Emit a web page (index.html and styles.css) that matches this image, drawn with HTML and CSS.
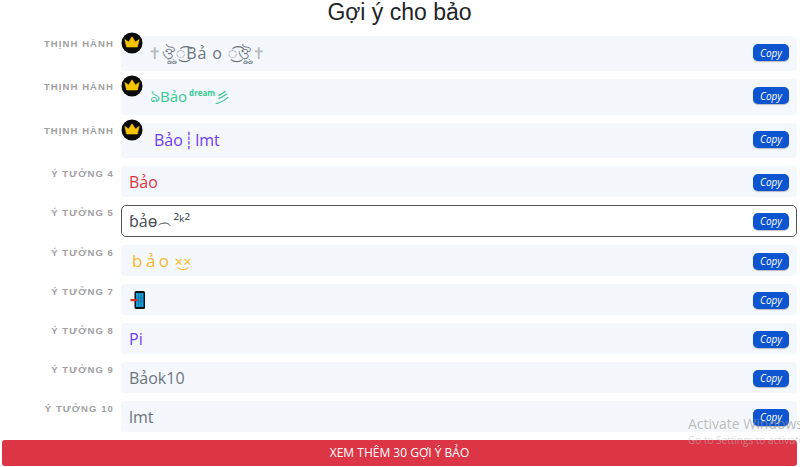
FILE: index.html
```html
<!DOCTYPE html>
<html lang="vi">

<head>
    <meta charset="UTF-8">
    <title>Gợi ý cho bảo</title>
    <link rel="stylesheet" href="styles.css">
</head>

<body>
    <h1 class="title">Gợi ý cho bảo</h1>

    <div class="list">
        <div class="row">
            <div class="label">Thịnh hành</div>
            <div class="field field-tall text-gray">
                <svg class="crown" viewBox="0 0 22 22"><circle cx="11" cy="11" r="10.5" fill="#0b0b0b"/><path d="M3.8 7.4 7.6 10 11 4.8 14.4 10 18.2 7.4 16.4 15H5.6Z" fill="#f5c400" stroke="#f5c400" stroke-linejoin="round" stroke-width="0.6"/></svg>
                <span class="nick nick-deco"><span class="pale">✝</span>ঔৣ◌͜͡Bả o ◌͜͡ঔৣ<span class="pale">✝</span></span>
                <button class="copy">Copy</button>
            </div>
        </div>
        <div class="row">
            <div class="label">Thịnh hành</div>
            <div class="field field-tall text-green">
                <svg class="crown" viewBox="0 0 22 22"><circle cx="11" cy="11" r="10.5" fill="#0b0b0b"/><path d="M3.8 7.4 7.6 10 11 4.8 14.4 10 18.2 7.4 16.4 15H5.6Z" fill="#f5c400" stroke="#f5c400" stroke-linejoin="round" stroke-width="0.6"/></svg>
                <span class="nick nick-dream"><span class="lead">ঌ</span>Bảo<span class="dream">dream</span><span class="wave">彡</span></span>
                <button class="copy">Copy</button>
            </div>
        </div>
        <div class="row">
            <div class="label">Thịnh hành</div>
            <div class="field field-tall text-purple">
                <svg class="crown" viewBox="0 0 22 22"><circle cx="11" cy="11" r="10.5" fill="#0b0b0b"/><path d="M3.8 7.4 7.6 10 11 4.8 14.4 10 18.2 7.4 16.4 15H5.6Z" fill="#f5c400" stroke="#f5c400" stroke-linejoin="round" stroke-width="0.6"/></svg>
                <span class="nick nick-indent">Bảo ┊ lmt</span>
                <button class="copy">Copy</button>
            </div>
        </div>
        <div class="row">
            <div class="label">Ý tưởng 4</div>
            <div class="field text-red">
                <span class="nick nick-low">Bảo</span>
                <button class="copy">Copy</button>
            </div>
        </div>
        <div class="row">
            <div class="label">Ý tưởng 5</div>
            <div class="field field-active text-dark">
                <span class="nick nick-low">ɓảɵ︵²ᵏ²</span>
                <button class="copy">Copy</button>
            </div>
        </div>
        <div class="row">
            <div class="label">Ý tưởng 6</div>
            <div class="field text-yellow">
                <span class="nick nick-wide">bảo<span class="face">×͜×</span></span>
                <button class="copy">Copy</button>
            </div>
        </div>
        <div class="row">
            <div class="label">Ý tưởng 7</div>
            <div class="field">
                <svg class="phone" viewBox="0 0 15 18"><rect x="4.5" y="0" width="10.5" height="18" rx="1.5" fill="#111"/><rect x="6" y="2" width="7.5" height="14" fill="#1c9fd8"/><path d="M6 7h7.5M6 10h7.5M8.5 2v14M11 2v14" stroke="#0d6f9e" stroke-width="0.7"/><rect x="0.5" y="8" width="7" height="2.2" fill="#d8301f"/></svg>
                <button class="copy">Copy</button>
            </div>
        </div>
        <div class="row">
            <div class="label">Ý tưởng 8</div>
            <div class="field text-purple">
                <span class="nick nick-low">Pi</span>
                <button class="copy">Copy</button>
            </div>
        </div>
        <div class="row">
            <div class="label">Ý tưởng 9</div>
            <div class="field text-gray">
                <span class="nick nick-low">Bảok10</span>
                <button class="copy">Copy</button>
            </div>
        </div>
        <div class="row">
            <div class="label">Ý tưởng 10</div>
            <div class="field text-gray">
                <span class="nick nick-low">lmt</span>
                <button class="copy">Copy</button>
            </div>
        </div>
    </div>

    <button class="more">XEM THÊM 30 GỢI Ý BẢO</button>

    <!-- Windows watermark -->
    <div class="watermark">
        <div class="watermark-title">Activate Windows</div>
        <div class="watermark-sub">Go to Settings to activate Windows.</div>
    </div>
</body>

</html>
```

FILE: styles.css
```css
* {
    margin: 0;
    padding: 0;
    box-sizing: border-box;
}

html,
body {
    height: 467px;
    overflow: hidden;
}

body {
    font-family: 'Open Sans', 'Noto Sans', sans-serif;
    background: #fff;
    position: relative;
    padding: 0 3px 0 2px;
}

.title {
    font-family: 'Liberation Sans', Arial, sans-serif;
    font-size: 23px;
    font-weight: 400;
    line-height: 24px;
    height: 36px;
    text-align: center;
    color: #212529;
}

.list {
    display: flex;
    flex-direction: column;
    gap: 8px;
}

.row {
    display: flex;
    align-items: flex-start;
    gap: 7px;
}

.label {
    width: 112px;
    padding-top: 2px;
    font-family: 'Liberation Sans', Arial, sans-serif;
    font-size: 9.5px;
    font-weight: 700;
    line-height: 12px;
    letter-spacing: 1.1px;
    text-align: right;
    text-transform: uppercase;
    color: #a0a0a0;
}

.field {
    flex: 1;
    height: 31px;
    display: flex;
    align-items: center;
    justify-content: space-between;
    position: relative;
    padding: 0 8px 0 8px;
    background: #f4f7fc;
    border-radius: 4px;
    font-size: 16px;
}

.field-tall {
    height: 35.33px;
}

.field-active {
    height: 32px;
    background: #fff;
    border: 1px solid #555;
    border-radius: 5px;
    padding: 0 7px 0 7px;
}

.text-gray { color: #6c757d; }
.text-green { color: #35c993; }
.text-purple { color: #6f3cf2; }
.text-red { color: #dc3545; }
.text-dark { color: #4a4f55; }
.text-yellow { color: #f9b72c; }

.pale {
    color: #b5bcc2;
}

.nick-low {
    padding-top: 2px;
}

.nick-deco {
    padding: 2px 0 0 19px;
    letter-spacing: 0.9px;
}

.nick-dream {
    padding: 1px 0 0 21px;
    font-size: 15px;
}

.lead {
    font-size: 17px;
}

.wave {
    font-size: 14px;
}

.nick-indent {
    padding-left: 25px;
    word-spacing: -3px;
}

.nick-wide {
    padding-left: 3px;
    font-size: 17px;
    letter-spacing: 3.5px;
}

.face {
    font-size: 15px;
    letter-spacing: 0;
    margin-left: 2px;
}

.dream {
    font-size: 8px;
    font-weight: 700;
    margin-left: 2px;
    vertical-align: 6px;
}

.crown {
    position: absolute;
    left: 0;
    top: -4px;
    width: 22px;
    height: 22px;
}

.phone {
    width: 15px;
    height: 18px;
    margin-left: 1px;
    margin-top: 1px;
}

.copy {
    align-self: flex-start;
    width: 36px;
    height: 17px;
    margin-top: 8px;
    font-family: 'Open Sans', sans-serif;
    font-size: 10px;
    font-style: italic;
    color: #fff;
    background: #0d55d0;
    border: none;
    border-radius: 5px;
    box-shadow: 0 1px 1px rgba(0, 0, 0, 0.25);
}

.field-active .copy {
    margin-top: 7px;
}

.more {
    display: block;
    width: 100%;
    height: 26px;
    margin-top: 8px;
    font-family: 'Open Sans', sans-serif;
    font-size: 12px;
    color: #fff;
    background: #dc3545;
    border: none;
    border-radius: 3px;
}

.watermark {
    position: absolute;
    right: 0;
    top: 414px;
    width: 112px;
    overflow: hidden;
    color: rgba(150, 150, 150, 0.6);
    white-space: nowrap;
    pointer-events: none;
}

.watermark-title {
    font-size: 14px;
    line-height: 19px;
}

.watermark-sub {
    font-size: 10px;
    line-height: 14px;
    color: rgba(190, 190, 190, 0.55);
}
```
